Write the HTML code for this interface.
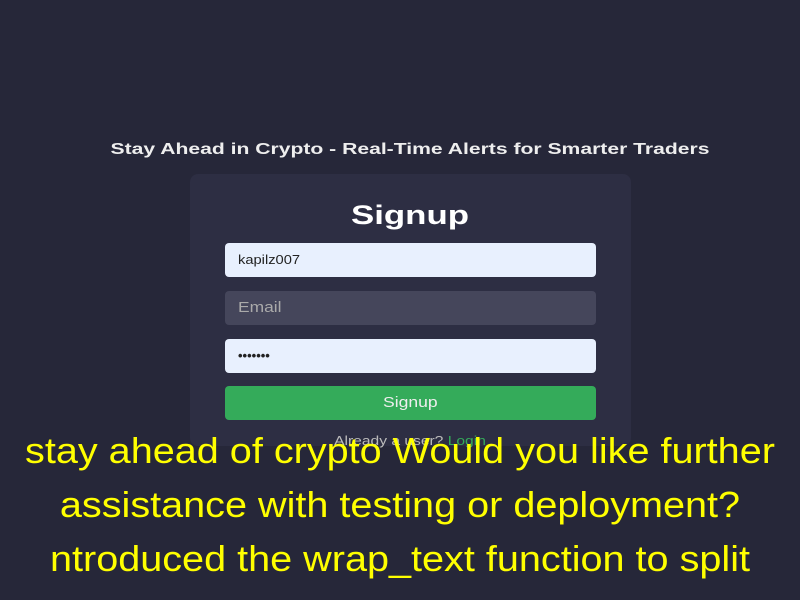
<!DOCTYPE html>
<html><head><style>
body{margin:0;width:800px;height:600px;background:#262739;font-family:"Liberation Sans",sans-serif;position:relative;overflow:hidden}
.t{position:absolute;top:141px;left:10px;width:800px;text-align:center;color:#eee;font-weight:bold;font-size:16px;transform:scaleX(1.32)}
.card{position:absolute;left:190px;top:174px;width:441px;height:272px;background:#2d2e43;border-radius:8px}
h1{position:absolute;top:200px;left:10px;width:800px;margin:0;text-align:center;color:#fff;font-size:27px;transform:scaleX(1.29)}
.in{position:absolute;left:225px;width:371px;height:34px;border-radius:4px;box-sizing:border-box;padding-left:13px;line-height:34px;font-size:13px}
.in span{display:inline-block;transform-origin:left center}
.a{top:243px;background:#e8f0fe;color:#222}
.a span{transform:scaleX(1.13)}
.b{top:291px;background:#45465b;color:#aaa;font-size:15px}
.b span{transform:scaleX(1.16)}
.c{top:339px;background:#e8f0fe;color:#222;font-weight:bold}
.d{top:386px;background:#34ab5a;color:#eee;text-align:center;padding:0;font-size:15px}
.d span{transform-origin:center;transform:scaleX(1.17)}
.l{position:absolute;top:433px;left:0;width:820px;text-align:center;color:#bbb;font-size:13px;transform:scaleX(1.2)}
.l span{color:#34ab5a}
.o{position:absolute;top:424px;left:0;width:800px;text-align:center;color:#ffff00;font-size:36px;line-height:54px;transform:scaleX(1.1)}
</style></head><body>
<div class="t">Stay Ahead in Crypto - Real-Time Alerts for Smarter Traders</div>
<div class="card"></div>
<h1>Signup</h1>
<div class="in a"><span>kapilz007</span></div>
<div class="in b"><span>Email</span></div>
<div class="in c">•••••••</div>
<div class="in d"><span>Signup</span></div>
<div class="l">Already a user? <span>Login</span></div>
<div class="o">stay ahead of crypto Would you like further<br>assistance with testing or deployment?<br>ntroduced the wrap_text function to split</div>
</body></html>
